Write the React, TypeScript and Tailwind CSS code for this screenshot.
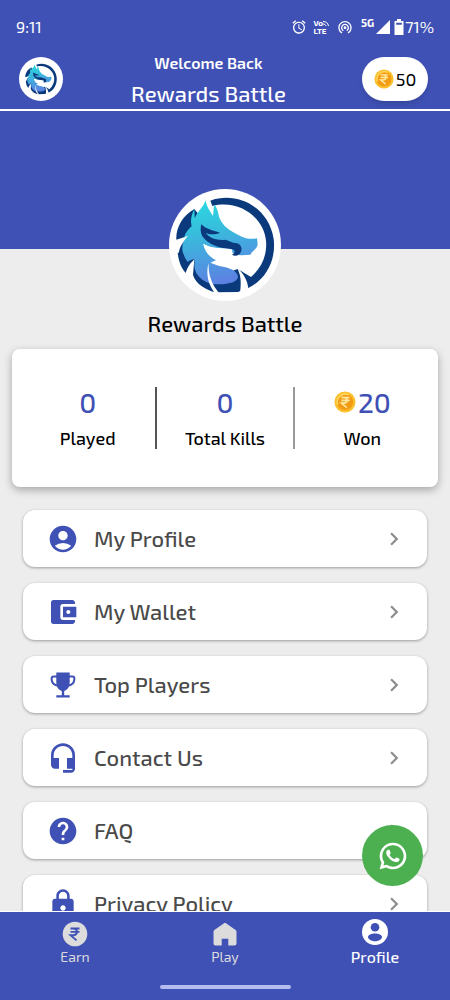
import React from "react";
import type { IconType } from "react-icons";
import {
  MdAccountBalanceWallet,
  MdAccountCircle,
  MdAlarm,
  MdChevronRight,
  MdHeadsetMic,
  MdHelp,
  MdLock,
  MdWifiTethering,
} from "react-icons/md";
import { RiWhatsappLine } from "react-icons/ri";

function DragonLogo({ className }: { className: string }) {
  return (
    <svg viewBox="0 0 336 336" className={className} role="img" aria-label="Rewards Battle logo">
      <defs>
        <linearGradient id="dragonBody" x1="0.4" y1="0" x2="0.6" y2="1">
          <stop offset="0" stopColor="#2bd6e0" />
          <stop offset="0.35" stopColor="#38bcdc" />
          <stop offset="0.65" stopColor="#4a9fe0" />
          <stop offset="1" stopColor="#5f7ee2" />
        </linearGradient>
      </defs>
      <circle cx="168" cy="168" r="168" fill="#fff" />
      <path
        d="M124 35C205 5 300 55 314 150C322 215 290 272 238 297L206 240L246 264C280 235 295 195 291 155C284 85 210 30 130 51Z"
        fill="#0a3a7c"
      />
      <path
        d="M76 60C40 80 20 118 22 152L54 142L26 182C26 212 36 238 52 254L76 210L72 258C80 285 112 304 140 310L206 309L235 299L206 240L150 260L90 190L100 90Z"
        fill="#0a3a7c"
      />
      <path
        d="M110 33C106 52 84 68 77 88L76 60C66 80 64 96 68 112C54 124 44 140 44 156C39 170 38 184 44 196C47 206 51 213 56 219C64 213 70 210 78 211C72 236 80 258 100 272C122 288 150 287 172 284C194 282 205 274 207 264C205 246 184 236 150 231L124 221L142 213C122 205 108 188 103 165C126 177 150 179 171 180C184 185 196 199 218 199L244 197C250 185 264 181 266 166L264 148C250 150 236 151 220 144C192 130 168 118 156 96C146 78 150 66 137 47C131 58 136 70 131 80C124 66 112 54 110 33Z"
        fill="url(#dragonBody)"
      />
      <path
        d="M97 106C110 120 130 124 153 131C140 138 120 137 110 132C122 148 146 155 170 152L192 161C212 160 222 174 216 188C211 200 198 204 189 197C199 193 200 182 188 180C152 180 116 166 100 142C94 130 94 118 97 106Z"
        fill="#0a3a7c"
      />
      <path
        d="M103 165C132 182 165 175 187 181C194 186 188 195 180 199C184 213 200 221 208 228C180 216 158 217 142 213C122 205 108 188 103 165Z"
        fill="#fff"
      />
      <path
        d="M78 211C60 236 61 264 82 286L70 288L48 258C54 238 62 222 78 211ZM119 221C117 256 128 286 150 312L138 312C116 286 110 250 119 221ZM205 238C216 258 217 282 213 310L238 302C237 276 224 254 205 238ZM10 184C20 162 36 148 57 140C44 156 32 172 29 192Z"
        fill="#fff"
      />
    </svg>
  );
}

function Coin({ className }: { className: string }) {
  return (
    <svg viewBox="0 0 24 24" className={className} aria-hidden="true">
      <circle cx="12" cy="12" r="11.5" fill="#fbc02d" />
      <circle cx="12" cy="12" r="9" fill="#f39b13" />
      <path d="M4 15A9 9 0 0 1 16 4" fill="none" stroke="#ffdc68" strokeWidth="1.5" />
      <path d="M8 7h9M8 10.2h9M8 7h2.5c5 0 5 6.2 0 6.2H8l6 5" fill="none" stroke="#ffeaa0" strokeWidth="1.7" />
    </svg>
  );
}

function TrophyIcon({ className }: { className?: string }) {
  return (
    <svg viewBox="-3.5 -3.5 32 32" className={className} aria-hidden="true">
      <path
        d="M5.800 0h13.400v10c0 4.500-2.200 7.300-5.500 8.500v4.200h5.500V25H5.800v-2.300h5.500v-4.200c-3.300-1.200-5.500-4-5.500-8.500z"
        fill="currentColor"
      />
      <path
        d="M6.500 4H3.200C1.800 4 1.100 4.700 1.100 6c0 4 2 6.700 6.400 7.200M18.500 4h3.300c1.400 0 2.100.7 2.100 2 0 4-2 6.700-6.400 7.200"
        fill="none"
        stroke="currentColor"
        strokeWidth="2"
      />
    </svg>
  );
}

function RupeeIcon({ className }: { className?: string }) {
  return (
    <svg viewBox="0 0 26 26" className={className} aria-hidden="true">
      <circle cx="13" cy="13" r="12.3" fill="currentColor" />
      <path d="M8.5 7.5h9M8.5 10.9h9M8.5 7.5h3c4.5 0 4.5 6.7 0 6.7h-3l6 5.2" fill="none" stroke="#3f51b5" strokeWidth="1.9" />
    </svg>
  );
}

function HouseIcon({ className }: { className?: string }) {
  return (
    <svg viewBox="0 0 26 26" className={className} aria-hidden="true">
      <path d="M12 2.2a1.6 1.6 0 0 1 2 0l9.6 6.9c.6.4.9 1 .9 1.7v11.700c0 1.100-.9 2-2 2h-6.200v-6.800h-6.600v6.800H3.500c-1.100 0-2-.9-2-2V10.800c0-.7.3-1.300.9-1.700z" fill="currentColor" />
    </svg>
  );
}

function ProfileIcon({ className }: { className?: string }) {
  return (
    <svg viewBox="0 0 26 26" className={className} aria-hidden="true">
      <circle cx="13" cy="13" r="13" fill="currentColor" />
      <circle cx="13" cy="8.300" r="4.300" fill="#3f51b5" />
      <path d="M6 18.300c0-5 14-5 14 0 0 1.500-3 4-7 4s-7-2.500-7-4z" fill="#3f51b5" />
    </svg>
  );
}

function StatusBar() {
  return (
    <div className="flex h-[54px] items-center justify-between px-4 text-base">
      <time>9:11</time>
      <div className="flex items-center">
        <MdAlarm className="mr-1.5 size-4" aria-hidden="true" />
        <span className="mr-2 flex flex-col text-[8px] leading-[8px] font-bold">
          <span className="flex items-center">
            Vo
            <svg viewBox="0 0 6 6" className="size-1.5" aria-hidden="true">
              <path d="M0 1.500C3 1.500 5 3 5.500 6M0 4c1.500 0 2.500.7 3 2" fill="none" stroke="currentColor" />
            </svg>
          </span>
          <span>LTE</span>
        </span>
        <MdWifiTethering className="mr-2 size-4" aria-hidden="true" />
        <span className="mb-2 text-[11px] leading-3 font-bold">5G</span>
        <svg viewBox="0 0 14 14" className="ml-0.5 size-3.5" aria-hidden="true">
          <path d="M14 0v14H0z" fill="currentColor" />
        </svg>
        <svg viewBox="0 0 10 16" className="mr-px ml-1 h-4 w-2.5" aria-hidden="true">
          <path d="M3 0h4v2h2.500v14h-9V2H3zM2.200 3.700v2h5.600v-2z" fill="currentColor" fillRule="evenodd" />
        </svg>
        <span>71%</span>
      </div>
    </div>
  );
}

function Stat({ label, value, coin }: { label: string; value: string; coin?: boolean }) {
  return (
    <div className="flex flex-1 flex-col items-center">
      <dt className="order-2 mt-1 text-lg leading-7 font-medium">{label}</dt>
      <dd className="flex items-center gap-0.5 text-[28px] leading-9 font-medium text-[#3f51b5]">
        {coin && <Coin className="size-[22px]" />}
        {value}
      </dd>
    </div>
  );
}

type Item = { label: string; icon: IconType | typeof TrophyIcon };

const items: Item[] = [
  { label: "My Profile", icon: MdAccountCircle },
  { label: "My Wallet", icon: MdAccountBalanceWallet },
  { label: "Top Players", icon: TrophyIcon },
  { label: "Contact Us", icon: MdHeadsetMic },
  { label: "FAQ", icon: MdHelp },
  { label: "Privacy Policy", icon: MdLock },
];

export default function App() {
  return (
    <div className="flex h-screen flex-col bg-[#ededed] font-['Exo_2',Roboto,sans-serif] text-black">
      <header className="shrink-0 border-b-2 border-white bg-[#3f51b5] text-white">
        <StatusBar />
        <div className="flex h-[55px] items-start justify-between pt-[3px] pr-[22px] pl-[19px]">
          <div className="rounded-full bg-white p-1">
            <DragonLogo className="size-9" />
          </div>
          <div className="-mt-2 flex-1 pr-2 text-center">
            <p className="text-base leading-7 font-semibold">Welcome Back</p>
            <h1 className="text-[22px] leading-8 font-medium">Rewards Battle</h1>
          </div>
          <div className="flex h-11 w-[66px] items-center justify-center gap-0.5 rounded-full bg-white text-lg text-black shadow-md">
            <Coin className="size-5" />
            50
          </div>
        </div>
      </header>

      <div className="relative min-h-0 flex-1">
        <main className="h-full overflow-y-auto [scrollbar-width:none]">
          <div className="h-[138px] bg-[#3f51b5]" />
          <DragonLogo className="relative mx-auto -mt-[60px] size-28" />
          <h2 className="mt-1.5 text-center text-[22px] leading-8 font-medium">Rewards Battle</h2>

          <dl className="mx-3 mt-2.5 flex h-[138px] items-center rounded-lg bg-white px-2 shadow-[0_3px_8px_rgba(0,0,0,0.3)]">
            <Stat label="Played" value="0" />
            <div className="h-[62px] w-0.5 bg-[#555]" />
            <Stat label="Total Kills" value="0" />
            <div className="h-[62px] w-0.5 bg-[#999]" />
            <Stat label="Won" value="20" coin />
          </dl>

          <ul className="mx-[23px] mt-[23px] flex flex-col gap-4 pb-6">
            {items.map(({ label, icon: Icon }) => (
              <li key={label}>
                <button
                  type="button"
                  className="flex h-[57px] w-full items-center rounded-xl bg-white pr-5 pl-6 text-left shadow-[0_1px_3px_rgba(0,0,0,0.35)]"
                >
                  <Icon className="size-8 text-[#3f51b5]" aria-hidden="true" />
                  <span className="ml-[15px] flex-1 text-[22px] font-medium text-[#4a4a4a]">{label}</span>
                  <MdChevronRight className="size-[26px] text-[#8c8c8c]" aria-hidden="true" />
                </button>
              </li>
            ))}
          </ul>
        </main>
        <button
          type="button"
          aria-label="Chat on WhatsApp"
          className="absolute right-[27px] bottom-[25px] flex size-[61px] items-center justify-center rounded-full bg-[#4caf50] text-white"
        >
          <RiWhatsappLine className="size-8" aria-hidden="true" />
        </button>
      </div>

      <nav className="shrink-0 border-t border-white bg-[#3f51b5]">
        <div className="grid h-[70px] grid-cols-3 pt-[7px]">
          <a href="#earn" className="flex flex-col items-center text-[#dcdcdc]">
            <RupeeIcon className="mt-0.5 size-[26px]" />
            <span className="text-sm">Earn</span>
          </a>
          <a href="#play" className="flex flex-col items-center text-[#dcdcdc]">
            <HouseIcon className="mt-0.5 size-[26px]" />
            <span className="text-sm">Play</span>
          </a>
          <a href="#profile" aria-current="page" className="flex flex-col items-center text-white">
            <ProfileIcon className="size-[26px]" />
            <span className="text-base font-medium">Profile</span>
          </a>
        </div>
        <div className="mx-auto mt-[3px] mb-[11px] h-1 w-[131px] rounded-full bg-[#b3bdf0]" />
      </nav>
    </div>
  );
}
